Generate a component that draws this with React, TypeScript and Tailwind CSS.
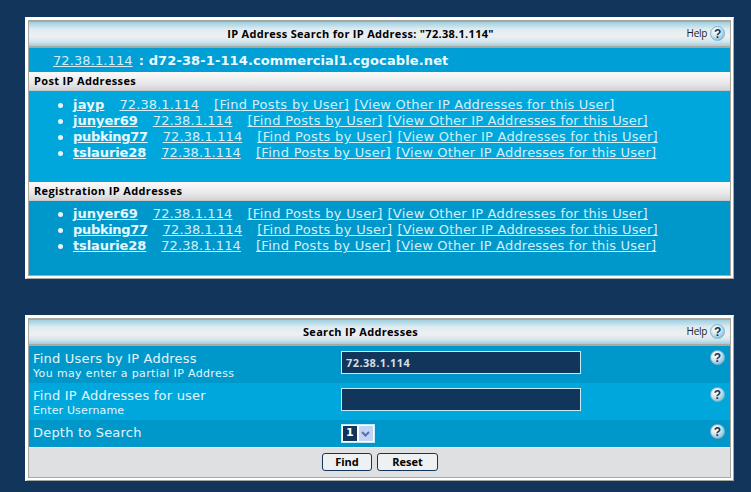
import React from 'react';

const ip = '72.38.1.114';
// name tracking differs per user, the bold widths do not scale evenly against the reference
const jayp = { name: 'jayp', track: 'tracking-[0.2px]' };
const junyer = { name: 'junyer69', track: 'tracking-[0px]' };
const pubking = { name: 'pubking77', track: 'tracking-[-0.33px]' };
const tslaurie = { name: 'tslaurie28', track: 'tracking-[-0.1px]' };
const postUsers = [jayp, junyer, pubking, tslaurie];
const regUsers = [junyer, pubking, tslaurie];

type User = typeof jayp;

const HelpIcon: React.FC = () => (
  <span className="flex h-[15px] w-[15px] items-center justify-center rounded-full border border-[#7fb4cf] bg-[radial-gradient(circle_at_35%_30%,#ffffff,#cfe6f1_45%,#5fa8cc)] font-['Liberation_Sans',sans-serif] text-[12px] leading-none font-bold text-[#12355b]">
    ?
  </span>
);

const Panel: React.FC<{ children: React.ReactNode; className: string }> = ({ children, className }) => (
  <div className={`border-t-[3px] border-r border-b border-l-[3px] border-t-white border-r-[#a8a8a0] border-b-[#a8a8a0] border-l-white ${className}`}>
    <div className="h-full border-r-2 border-b-2 border-white">
      <div className="flex h-full flex-col border border-t-2 border-[#a8a8a0]">{children}</div>
    </div>
  </div>
);

const PanelHeader: React.FC<{ children: React.ReactNode }> = ({ children }) => (
  <div className="relative flex h-[26px] shrink-0 items-center justify-center border-b-2 border-[#a8a8a0] bg-[linear-gradient(#9fcfe0_0%,#dfecf1_30%,#eef0f2_60%,#d5e5ec_82%,#9ccfe0_100%)] pr-[38px] font-['Open_Sans',sans-serif] text-[11px] font-bold tracking-[0.3px] text-black">
    {children}
    <div className="absolute top-[4px] right-[5px] flex items-center gap-[3px] text-[10px] font-normal tracking-[-0.3px] text-[#222]">
      Help <HelpIcon />
    </div>
  </div>
);

const SectionHeader: React.FC<{ children: React.ReactNode }> = ({ children }) => (
  <div className="flex h-[19px] shrink-0 items-center border-b border-[#c8c8c8] bg-[linear-gradient(#fbfbfb,#e9e9eb_60%,#d4d4d6)] pt-[1px] pl-[5px] font-['Open_Sans',sans-serif] text-[11px] font-bold tracking-[0.35px] text-black">
    {children}
  </div>
);

const UserRow: React.FC<{ user: User }> = ({ user }) => (
  <li className="flex h-4 items-center">
    <span className="mr-[10px] h-[5px] w-[5px] rounded-full bg-[#e8f4fa]" />
    <a className={`mr-[15px] font-bold text-[#e8f7fc] underline ${user.track}`}>{user.name}</a>
    <a className="mr-[15px] tracking-[0.1px] underline">{ip}</a>
    <a className="mr-[5px] tracking-[0.32px] underline">[Find Posts by User]</a>
    <a className="tracking-[0.21px] underline">[View Other IP Addresses for this User]</a>
  </li>
);

const UserList: React.FC<{ users: User[]; className: string }> = ({ users, className }) => (
  <ul className={`text-[13px] text-[#d4eef8] ${className}`}>
    {users.map((u) => (
      <UserRow key={u.name} user={u} />
    ))}
  </ul>
);

const FormRow: React.FC<{ title: string; sub?: string; subTrack?: string; bg: string; height: string; children: React.ReactNode }> = ({ title, sub, subTrack, bg, height, children }) => (
  <div className={`relative flex shrink-0 pl-[4px] text-[#e4f4fa] ${bg} ${height}`}>
    <div className="w-[308px] pt-[5px]">
      <div className="text-[13px] leading-[16px] tracking-[0.2px]">{title}</div>
      {sub && <div className={`text-[11px] leading-[14px] ${subTrack}`}>{sub}</div>}
    </div>
    {children}
    <div className="absolute top-[4px] right-[5px]">
      <HelpIcon />
    </div>
  </div>
);

export default function App() {
  return (
    <div className="flex h-[492px] w-[751px] flex-col overflow-hidden bg-[#12355b] pt-[17px] pl-[25px] font-['DejaVu_Sans',sans-serif]">
      <Panel className="h-[262px] w-[709px]">
        <PanelHeader>IP Address Search for IP Address: "72.38.1.114"</PanelHeader>
        <div className="flex h-[24px] shrink-0 items-center bg-[#00a0d6] pt-[1px] pl-[24px] text-[13px] text-[#d4eef8]">
          <a className="tracking-[0.1px] underline">{ip}</a>
          <b className="ml-[6px] tracking-[0.12px] text-[#eef9fd]">: d72-38-1-114.commercial1.cgocable.net</b>
        </div>
        <SectionHeader>Post IP Addresses</SectionHeader>
        <UserList users={postUsers} className="h-[91px] shrink-0 bg-[#00a7dc] pt-[6px] pl-[29px]" />
        <SectionHeader>Registration IP Addresses</SectionHeader>
        <UserList users={regUsers} className="flex-1 bg-[#0098cb] pt-[5px] pl-[29px]" />
      </Panel>

      <Panel className="mt-[36px] h-[166px] w-[709px]">
        <PanelHeader>Search IP Addresses</PanelHeader>
        <FormRow title="Find Users by IP Address" sub="You may enter a partial IP Address" subTrack="tracking-[0.36px]" bg="bg-[#0098cb]" height="h-[37px]">
          <input
            readOnly
            value={ip}
            className="mt-[5px] h-[23px] w-[240px] border border-[#c4ecf6] bg-[#12355b] px-[4px] font-['Open_Sans',sans-serif] text-[11px] font-bold tracking-[0.4px] text-[#d8dde2] outline-none"
          />
        </FormRow>
        <FormRow title="Find IP Addresses for user" sub="Enter Username" subTrack="tracking-[0.15px]" bg="bg-[#00a7dc]" height="h-[37px]">
          <input readOnly className="mt-[5px] h-[23px] w-[240px] border border-[#c4ecf6] bg-[#12355b] outline-none" />
        </FormRow>
        <FormRow title="Depth to Search" bg="bg-[#0098cb]" height="h-[27px]">
          <div className="mt-[4px] flex h-[19px] w-[34px] items-center gap-[2px] border border-[#c4ecf6] bg-white p-[1px]">
            <span className="flex h-[15px] w-[14px] items-center justify-center bg-[#12355b] text-[11px] font-bold text-white">1</span>
            <span className="flex h-[15px] w-[15px] items-center justify-center bg-[#c3d3f5]">
              <svg width="9" height="6" viewBox="0 0 9 6">
                <path d="M1 1l3.5 3.5L8 1" fill="none" stroke="#5a6fa8" strokeWidth="2" />
              </svg>
            </span>
          </div>
        </FormRow>
        <div className="flex flex-1 items-center justify-center gap-[5px] border-t border-[#e8f4f8] bg-[#dfe0e2] pl-[1px] pb-[1px]">
          <button className="h-[18px] w-[50px] rounded-[3px] border border-[#12355b] bg-[#eef0f2] font-['Open_Sans',sans-serif] text-[11px] font-bold text-black">Find</button>
          <button className="h-[18px] w-[61px] rounded-[3px] border border-[#12355b] bg-[#eef0f2] font-['Open_Sans',sans-serif] text-[11px] font-bold text-black">Reset</button>
        </div>
      </Panel>
    </div>
  );
}
